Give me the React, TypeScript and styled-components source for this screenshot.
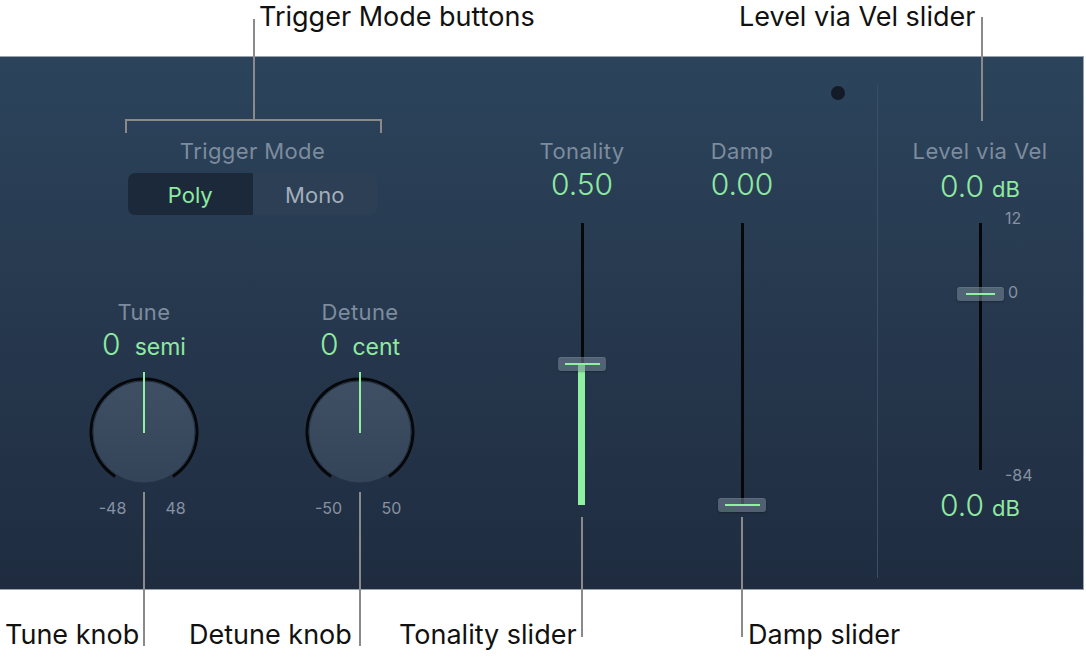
import React from "react";
import styled, { createGlobalStyle } from "styled-components";

const GlobalStyle = createGlobalStyle`
  html, body { margin: 0; padding: 0; background: #ffffff; }
  body { font-family: Inter, "Noto Sans", "Liberation Sans", sans-serif; }
  * { box-sizing: border-box; }
`;

const GREEN = "#8fe9a0";
const LABEL = "#7d8c9d";
const TICK = "#8592a2";

const Page = styled.div`
  position: relative;
  width: 1086px;
  height: 666px;
  display: flex;
  flex-direction: column;
  background: #ffffff;
`;

const CalloutBar = styled.div<{ $h: number }>`
  position: relative;
  flex: none;
  height: ${(p) => p.$h}px;
`;

const CalloutText = styled.span<{ $x: number; $top: number }>`
  position: absolute;
  left: ${(p) => p.$x}px;
  top: ${(p) => p.$top}px;
  font-size: 27px;
  line-height: 33px;
  color: #111111;
  white-space: nowrap;
`;

const Leader = styled.div<{ $x: number; $y1: number; $y2: number }>`
  position: absolute;
  left: ${(p) => p.$x - 1}px;
  top: ${(p) => p.$y1}px;
  width: 2px;
  height: ${(p) => p.$y2 - p.$y1}px;
  background: #8a8a8a;
  z-index: 2;
`;

const Bracket = styled.div`
  position: absolute;
  left: 125px;
  top: 119px;
  width: 257px;
  height: 14px;
  border: 2px solid #8a8a8a;
  border-bottom: none;
  z-index: 2;
`;

const Panel = styled.div`
  flex: none;
  display: flex;
  width: 1084px;
  height: 534px;
  border-top: 1px solid #98a3af;
  border-bottom: 1px solid #98a3af;
  border-right: 1px solid #98a3af;
  background: linear-gradient(180deg, #2b445c 0%, #27394f 45%, #1f2c40 100%);
`;

const LeftBlock = styled.div`
  width: 522px;
  flex: none;
  display: flex;
  flex-direction: column;
  padding-top: 82px;
`;

const TriggerGroup = styled.div`
  width: 249px;
  margin-left: 128px;
  display: flex;
  flex-direction: column;
  align-items: center;
`;

const ControlLabel = styled.div`
  font-size: 22px;
  line-height: 24px;
  letter-spacing: 0.4px;
  color: ${LABEL};
  white-space: nowrap;
  text-align: center;
`;

const Segmented = styled.div`
  margin-top: 10px;
  width: 249px;
  height: 42px;
  display: flex;
  border-radius: 7px;
  overflow: hidden;
`;

const Segment = styled.div<{ $active?: boolean }>`
  flex: 1;
  display: flex;
  align-items: center;
  justify-content: center;
  font-size: 22px;
  padding-top: 2px;
  background: ${(p) => (p.$active ? "#1c293a" : "#2c3f54")};
  color: ${(p) => (p.$active ? GREEN : "#a2aebb")};
`;

const KnobRow = styled.div`
  margin-top: 85px;
  display: flex;
  padding-left: 76px;
  gap: 80px;
`;

const KnobCell = styled.div`
  width: 136px;
  display: flex;
  flex-direction: column;
  align-items: center;
`;

const ValueRow = styled.div<{ $mt: number }>`
  margin-top: ${(p) => p.$mt}px;
  height: 32px;
  display: flex;
  align-items: baseline;
  justify-content: center;
  white-space: nowrap;
  color: ${GREEN};
`;

const BigValue = styled.span`
  font-size: 30px;
  line-height: 32px;
  font-weight: 300;
`;

const Unit = styled.span<{ $gap: number; $size: number }>`
  margin-left: ${(p) => p.$gap}px;
  font-size: ${(p) => p.$size}px;
  line-height: 32px;
  font-weight: 400;
`;

const KnobSvg = styled.svg`
  margin-top: 12px;
  display: block;
  flex: none;
`;

const TickRow = styled.div`
  margin-top: 7px;
  display: flex;
  gap: 23px;
`;

const Tick = styled.span`
  width: 40px;
  text-align: center;
  font-size: 16px;
  line-height: 18px;
  color: ${TICK};
`;

const SliderCol = styled.div<{ $w: number }>`
  width: ${(p) => p.$w}px;
  flex: none;
  display: flex;
  flex-direction: column;
  align-items: center;
  padding-top: 82px;
`;

const Spacer = styled.div<{ $w: number }>`
  width: ${(p) => p.$w}px;
  flex: none;
`;

const SliderArea = styled.div<{ $h: number; $mt: number }>`
  position: relative;
  margin-top: ${(p) => p.$mt}px;
  width: 60px;
  height: ${(p) => p.$h}px;
  display: flex;
  justify-content: center;
`;

const Track = styled.div`
  width: 3px;
  height: 100%;
  background: #050708;
`;

const Fill = styled.div`
  position: absolute;
  left: 26px;
  width: 7px;
  bottom: 0;
  background: #8ef0a0;
`;

const Handle = styled.div<{ $w: number }>`
  position: absolute;
  left: 50%;
  width: ${(p) => p.$w}px;
  height: 14px;
  margin-left: ${(p) => -p.$w / 2}px;
  border-radius: 3px;
  background: rgba(120, 136, 152, 0.55);
  box-shadow: inset 0 1px 0 rgba(255, 255, 255, 0.08), 0 1px 2px rgba(0, 0, 0, 0.25);
  display: flex;
  align-items: center;
  justify-content: center;
`;

const HandleLine = styled.div<{ $w: number }>`
  width: ${(p) => p.$w}px;
  height: 2px;
  background: #8ef0a0;
`;

const ScaleMark = styled.span`
  position: absolute;
  left: 55px;
  font-size: 16px;
  line-height: 18px;
  color: ${TICK};
  white-space: nowrap;
`;

const DotCol = styled.div`
  width: 75px;
  flex: none;
  padding-top: 29px;
  padding-left: 29px;
`;

const Dot = styled.div`
  width: 14px;
  height: 14px;
  border-radius: 50%;
  background: #121b27;
`;

const Separator = styled.div`
  width: 1px;
  flex: none;
  margin-top: 28px;
  height: 493px;
  background: #3a4e65;
`;

const Knob: React.FC = () => (
  <KnobSvg width={120} height={120} viewBox="0 0 120 120">
    <defs>
      <linearGradient id="kf" x1="0" y1="0" x2="0" y2="1">
        <stop offset="0" stopColor="#3f5064" />
        <stop offset="1" stopColor="#344458" />
      </linearGradient>
    </defs>
    <path
      d="M31.1 104.4 A53 53 0 1 1 88.9 104.4"
      fill="none"
      stroke="#050708"
      strokeWidth={3}
    />
    <circle cx={60} cy={60} r={51} fill="url(#kf)" stroke="#243245" strokeWidth={1} />
    <line x1={60} y1={0} x2={60} y2={61} stroke="#8ef0a0" strokeWidth={2} />
  </KnobSvg>
);

export default function App() {
  return (
    <Page>
      <GlobalStyle />
      <CalloutBar $h={56}>
        <CalloutText $x={259} $top={0}>Trigger Mode buttons</CalloutText>
        <CalloutText $x={739} $top={0}>Level via Vel slider</CalloutText>
      </CalloutBar>

      <Panel>
        <LeftBlock>
          <TriggerGroup>
            <ControlLabel>Trigger Mode</ControlLabel>
            <Segmented>
              <Segment $active>Poly</Segment>
              <Segment>Mono</Segment>
            </Segmented>
          </TriggerGroup>
          <KnobRow>
            <KnobCell>
              <ControlLabel>Tune</ControlLabel>
              <ValueRow $mt={4}>
                <BigValue>0</BigValue>
                <Unit $gap={14} $size={23}>semi</Unit>
              </ValueRow>
              <Knob />
              <TickRow>
                <Tick>-48</Tick>
                <Tick>48</Tick>
              </TickRow>
            </KnobCell>
            <KnobCell>
              <ControlLabel>Detune</ControlLabel>
              <ValueRow $mt={4}>
                <BigValue>0</BigValue>
                <Unit $gap={14} $size={23}>cent</Unit>
              </ValueRow>
              <Knob />
              <TickRow>
                <Tick>-50</Tick>
                <Tick>50</Tick>
              </TickRow>
            </KnobCell>
          </KnobRow>
        </LeftBlock>

        <SliderCol $w={120}>
          <ControlLabel>Tonality</ControlLabel>
          <ValueRow $mt={5}>
            <BigValue>0.50</BigValue>
          </ValueRow>
          <SliderArea $h={282} $mt={23}>
            <Track />
            <Fill style={{ top: 141 }} />
            <Handle $w={48} style={{ top: 134 }}>
              <HandleLine $w={35} />
            </Handle>
          </SliderArea>
        </SliderCol>

        <Spacer $w={40} />

        <SliderCol $w={120}>
          <ControlLabel>Damp</ControlLabel>
          <ValueRow $mt={5}>
            <BigValue>0.00</BigValue>
          </ValueRow>
          <SliderArea $h={282} $mt={23}>
            <Track />
            <Handle $w={48} style={{ top: 275 }}>
              <HandleLine $w={35} />
            </Handle>
          </SliderArea>
        </SliderCol>

        <DotCol>
          <Dot />
        </DotCol>

        <Separator />

        <SliderCol $w={204}>
          <ControlLabel>Level via Vel</ControlLabel>
          <ValueRow $mt={7}>
            <BigValue>0.0</BigValue>
            <Unit $gap={8} $size={22}>dB</Unit>
          </ValueRow>
          <SliderArea $h={247} $mt={21}>
            <Track />
            <ScaleMark style={{ top: -14 }}>12</ScaleMark>
            <ScaleMark style={{ top: 60, left: 58 }}>0</ScaleMark>
            <ScaleMark style={{ top: 243 }}>-84</ScaleMark>
            <Handle $w={47} style={{ top: 64 }}>
              <HandleLine $w={29} />
            </Handle>
          </SliderArea>
          <ValueRow $mt={19}>
            <BigValue>0.0</BigValue>
            <Unit $gap={8} $size={22}>dB</Unit>
          </ValueRow>
        </SliderCol>
      </Panel>

      <CalloutBar $h={76}>
        <CalloutText $x={5} $top={28}>Tune knob</CalloutText>
        <CalloutText $x={189} $top={28}>Detune knob</CalloutText>
        <CalloutText $x={399} $top={28}>Tonality slider</CalloutText>
        <CalloutText $x={748} $top={28}>Damp slider</CalloutText>
      </CalloutBar>

      <Leader $x={254} $y1={19} $y2={121} />
      <Bracket />
      <Leader $x={982} $y1={17} $y2={121} />
      <Leader $x={144} $y1={492} $y2={646} />
      <Leader $x={360} $y1={492} $y2={646} />
      <Leader $x={582} $y1={517} $y2={637} />
      <Leader $x={742} $y1={517} $y2={637} />
    </Page>
  );
}
